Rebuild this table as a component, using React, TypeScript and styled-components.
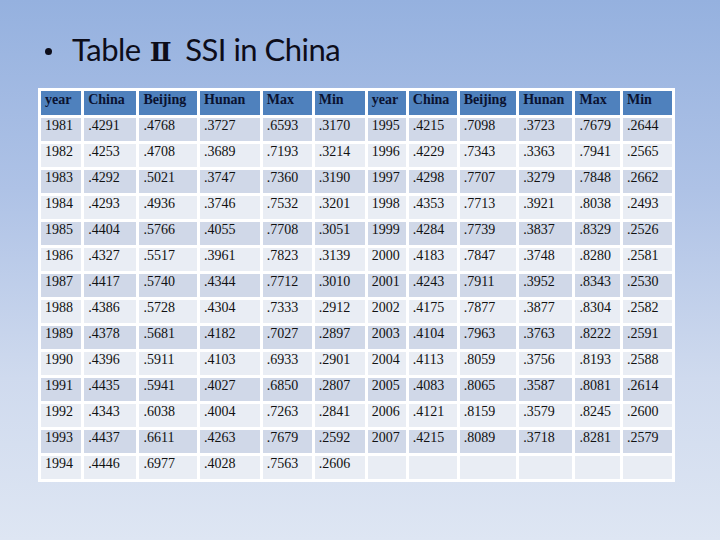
import styled, { createGlobalStyle } from 'styled-components';

/* ─── Data ─────────────────────────────────────── */

const HEADERS = ['year', 'China', 'Beijing', 'Hunan', 'Max', 'Min'];

const LEFT: string[][] = [
  ['1981', '.4291', '.4768', '.3727', '.6593', '.3170'],
  ['1982', '.4253', '.4708', '.3689', '.7193', '.3214'],
  ['1983', '.4292', '.5021', '.3747', '.7360', '.3190'],
  ['1984', '.4293', '.4936', '.3746', '.7532', '.3201'],
  ['1985', '.4404', '.5766', '.4055', '.7708', '.3051'],
  ['1986', '.4327', '.5517', '.3961', '.7823', '.3139'],
  ['1987', '.4417', '.5740', '.4344', '.7712', '.3010'],
  ['1988', '.4386', '.5728', '.4304', '.7333', '.2912'],
  ['1989', '.4378', '.5681', '.4182', '.7027', '.2897'],
  ['1990', '.4396', '.5911', '.4103', '.6933', '.2901'],
  ['1991', '.4435', '.5941', '.4027', '.6850', '.2807'],
  ['1992', '.4343', '.6038', '.4004', '.7263', '.2841'],
  ['1993', '.4437', '.6611', '.4263', '.7679', '.2592'],
  ['1994', '.4446', '.6977', '.4028', '.7563', '.2606'],
];

const RIGHT: string[][] = [
  ['1995', '.4215', '.7098', '.3723', '.7679', '.2644'],
  ['1996', '.4229', '.7343', '.3363', '.7941', '.2565'],
  ['1997', '.4298', '.7707', '.3279', '.7848', '.2662'],
  ['1998', '.4353', '.7713', '.3921', '.8038', '.2493'],
  ['1999', '.4284', '.7739', '.3837', '.8329', '.2526'],
  ['2000', '.4183', '.7847', '.3748', '.8280', '.2581'],
  ['2001', '.4243', '.7911', '.3952', '.8343', '.2530'],
  ['2002', '.4175', '.7877', '.3877', '.8304', '.2582'],
  ['2003', '.4104', '.7963', '.3763', '.8222', '.2591'],
  ['2004', '.4113', '.8059', '.3756', '.8193', '.2588'],
  ['2005', '.4083', '.8065', '.3587', '.8081', '.2614'],
  ['2006', '.4121', '.8159', '.3579', '.8245', '.2600'],
  ['2007', '.4215', '.8089', '.3718', '.8281', '.2579'],
  ['', '', '', '', '', ''],
];

// relative column widths (the table itself is fixed at 637px)
const COL_WIDTHS = [37, 48, 53, 55, 45, 46, 35, 44, 52, 49, 41, 45];

/* ─── Styles ───────────────────────────────────── */

const GlobalStyle = createGlobalStyle`
  html, body { margin: 0; padding: 0; }
`;

const Slide = styled.div`
  width: 720px;
  height: 540px;
  box-sizing: border-box;
  background: linear-gradient(180deg, #95b1df 0%, #aec2e6 35%, #cfdaee 70%, #dee6f3 100%);
  padding: 28px 0 0 38px;
  display: flex;
  flex-direction: column;
  align-items: flex-start;
  gap: 16px;
`;

const Title = styled.div`
  display: flex;
  align-items: center;
  gap: 20px;
  padding-left: 7px;
  height: 44px;
  font-family: Lato, "Open Sans", sans-serif;
  font-size: 31px;
  line-height: 44px;
  letter-spacing: -0.5px;
  color: #0d0d1a;
`;

const Bullet = styled.span`
  width: 7px;
  height: 7px;
  border-radius: 50%;
  background: #0d0d1a;
  flex-shrink: 0;
  margin-top: 2px;
`;

const Roman = styled.span`
  font-family: "DejaVu Serif", "Liberation Serif", serif;
  font-weight: bold;
  font-size: 26px;
  margin: 0 14px 0 9px;
`;

const Table = styled.table`
  width: 637px;
  table-layout: fixed;
  border-collapse: separate;
  border-spacing: 3px;
  background: #ffffff;
  font-family: "Liberation Serif", serif;
  font-size: 14px;
  line-height: 16px;
`;

const HeadCell = styled.th`
  height: 24px;
  padding: 1px 0 0 4px;
  box-sizing: border-box;
  background: #4f81bd;
  color: #0a1230;
  font-weight: bold;
  text-align: left;
  vertical-align: top;
  white-space: nowrap;
  overflow: hidden;
`;

const Cell = styled.td<{ $odd: boolean }>`
  height: 23px;
  padding: 0 0 0 4px;
  box-sizing: border-box;
  background: ${({ $odd }) => ($odd ? '#d0d8e8' : '#e9edf4')};
  color: #111111;
  text-align: left;
  vertical-align: top;
  white-space: nowrap;
  overflow: hidden;
`;

/* ─── Page ─────────────────────────────────────── */

export default function App() {
  return (
    <>
      <GlobalStyle />
      <Slide>
        <Title>
          <Bullet />
          <span>
            Table<Roman>Ⅱ</Roman>SSI in China
          </span>
        </Title>
        <Table>
          <colgroup>
            {COL_WIDTHS.map((w, i) => (
              <col key={i} style={{ width: w }} />
            ))}
          </colgroup>
          <thead>
            <tr>
              {[...HEADERS, ...HEADERS].map((h, i) => (
                <HeadCell key={i}>{h}</HeadCell>
              ))}
            </tr>
          </thead>
          <tbody>
            {LEFT.map((row, r) => (
              <tr key={r}>
                {[...row, ...RIGHT[r]].map((v, c) => (
                  <Cell key={c} $odd={r % 2 === 0}>{v}</Cell>
                ))}
              </tr>
            ))}
          </tbody>
        </Table>
      </Slide>
    </>
  );
}
